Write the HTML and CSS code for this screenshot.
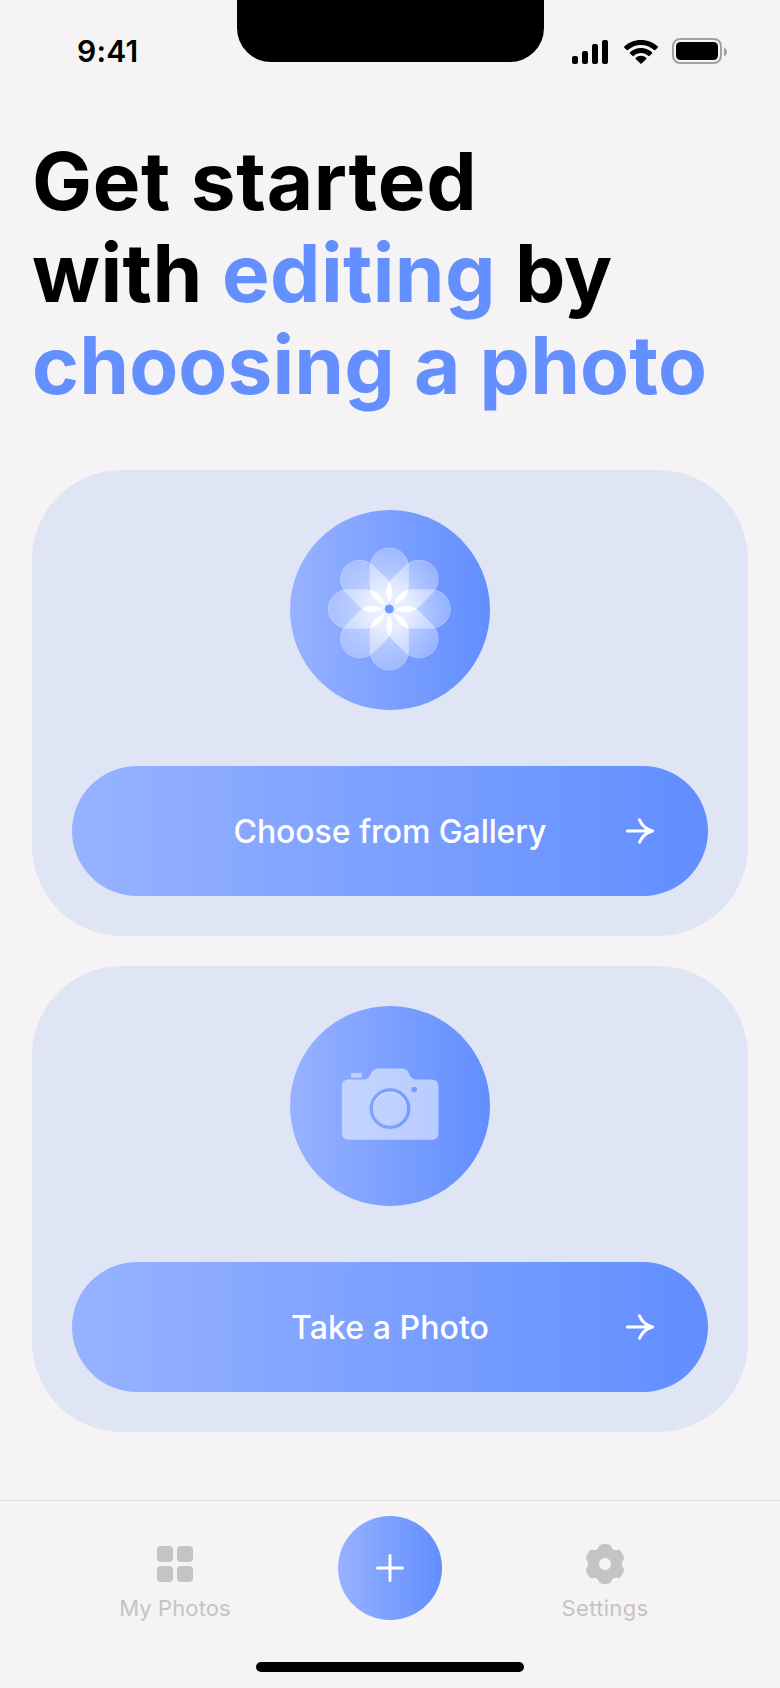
FILE: index.html
```html
<!DOCTYPE html>
<html lang="en">
<head>
<meta charset="utf-8">
<title>Get started</title>
<link rel="stylesheet" href="styles.css">
</head>
<body>
<div class="screen">
  <header class="status">
    <span class="time">9:41</span>
    <div class="notch"></div>
    <div class="indicators">
      <svg class="signal" width="36" height="24" viewBox="0 0 36 24"><rect y="16" width="6" height="8" rx="2"/><rect x="10" y="11" width="6" height="13" rx="2"/><rect x="20" y="4" width="6" height="20" rx="2"/><rect x="30" width="6" height="24" rx="2"/></svg>
      <svg class="wifi" width="34" height="24" viewBox="0 0 34 24"><path d="M17 0C23.600 0 29.600 2.600 33.700 6.500Q34.300 7.100 33.700 7.700L31.300 10.100Q30.700 10.600 30.100 10.100C26.600 6.900 22 5 17 5S7.400 6.900 3.900 10.100Q3.300 10.600 2.700 10.100L.3 7.700Q-.3 7.100 .3 6.500C4.400 2.600 10.400 0 17 0Z"/><path d="M17 8C21.300 8 25.200 9.700 28 12.300Q28.600 12.900 28 13.500L25.600 15.800Q25 16.400 24.400 15.900C22.400 14.100 19.800 13 17 13S11.600 14.100 9.600 15.900Q9 16.400 8.400 15.800L6 13.500Q5.400 12.900 6 12.300C8.800 9.700 12.700 8 17 8Z"/><path d="M17 15.800C19.100 15.800 21 16.600 22.300 17.900Q22.900 18.500 22.300 19.100L17.600 23.600Q17 24.100 16.400 23.600L11.700 19.100Q11.100 18.500 11.700 17.900C13 16.600 14.900 15.800 17 15.800Z"/></svg>
      <svg class="battery" width="55" height="26" viewBox="0 0 55 26"><rect x="1" y="1" width="48" height="24" rx="7" fill="none" stroke="#a3a2a2" stroke-width="2"/><rect x="4" y="4" width="42" height="18" rx="4.500"/><path d="M52 9.500C54 10.400 55 12 55 14S54 17.300 52 18.200Z" fill="#a3a2a2"/></svg>
    </div>
  </header>

  <main class="content">
    <h1 class="title"><span class="line-one">Get started</span><br><span class="line-two">with <span class="accent">editing</span></span> by<br><span class="accent line-three">choosing a photo</span></h1>

    <section class="card">
      <div class="badge">
        <svg width="160" height="160" viewBox="-80 -80 160 160">
          <defs>
            <radialGradient id="petal-fill" gradientUnits="userSpaceOnUse" cx="0" cy="0" r="62">
              <stop offset="0" stop-color="#fff" stop-opacity=".64"/>
              <stop offset=".3" stop-color="#fff" stop-opacity=".58"/>
              <stop offset=".6" stop-color="#fff" stop-opacity=".42"/>
              <stop offset="1" stop-color="#fff" stop-opacity=".26"/>
            </radialGradient>
            <g id="petal">
              <rect x="-19.500" y="-61.500" width="39" height="57.500" rx="19.500" fill="url(#petal-fill)"/>
              <rect x="-19" y="-61" width="38" height="56.500" rx="19" fill="none" stroke="#fff" stroke-opacity=".13"/>
            </g>
            <path id="stamen" d="M0 -27.500Q6 -17 0 -7Q-6 -17 0 -27.500Z" fill="#fff" fill-opacity=".9"/>
          </defs>
          <g transform="translate(-.7 -1)">
            <use href="#petal"/>
            <use href="#petal" transform="rotate(45)"/>
            <use href="#petal" transform="rotate(90)"/>
            <use href="#petal" transform="rotate(135)"/>
            <use href="#petal" transform="rotate(180)"/>
            <use href="#petal" transform="rotate(225)"/>
            <use href="#petal" transform="rotate(270)"/>
            <use href="#petal" transform="rotate(315)"/>
            <use href="#stamen"/>
            <use href="#stamen" transform="rotate(45)"/>
            <use href="#stamen" transform="rotate(90)"/>
            <use href="#stamen" transform="rotate(135)"/>
            <use href="#stamen" transform="rotate(180)"/>
            <use href="#stamen" transform="rotate(225)"/>
            <use href="#stamen" transform="rotate(270)"/>
            <use href="#stamen" transform="rotate(315)"/>
            <circle r="4.200" fill="#6f98ff"/>
          </g>
        </svg>
      </div>
      <div class="button">
        <span class="label-gallery">Choose from Gallery</span>
        <svg class="arrow" width="28" height="26" viewBox="0 0 28 26"><path d="M1.500 13H26.500M13.500 1.800C15.500 6.500 20 11.200 26.500 13C20 14.800 15.500 19.500 13.500 24.200"/></svg>
      </div>
    </section>

    <section class="card">
      <div class="badge">
        <svg width="140" height="120" viewBox="0 6 140 120">
          <defs>
            <mask id="camera-cut" maskUnits="userSpaceOnUse" x="0" y="0" width="140" height="130">
              <rect width="140" height="130" fill="#fff"/>
              <circle cx="70" cy="68.600" r="18.800" fill="none" stroke="#000" stroke-width="3.300"/>
              <circle cx="94.300" cy="49.500" r="2.800" fill="#000"/>
            </mask>
          </defs>
          <g mask="url(#camera-cut)" fill="#fff" fill-opacity=".51" stroke="#fff" stroke-opacity=".22">
            <path d="M28.500 39.800H43C47.500 39.800 49.500 37.500 51 34C52.500 30.300 55 28.800 59 28.800H81C85 28.800 87.500 30.300 89 34C90.500 37.500 92.500 39.800 97 39.800H111.700Q118.200 39.800 118.200 46.300V93Q118.200 99.500 111.700 99.500H28.500Q22.200 99.500 22.200 93V46.300Q22.200 39.800 28.500 39.800Z"/>
            <rect x="31.500" y="33.300" width="10" height="4"/>
            <path d="M54.500 63A16.500 16.500 0 0 1 85.500 63" fill="none" stroke-opacity=".4"/>
          </g>
        </svg>
      </div>
      <div class="button">
        <span class="label-camera">Take a Photo</span>
        <svg class="arrow" width="28" height="26" viewBox="0 0 28 26"><path d="M1.500 13H26.500M13.500 1.800C15.500 6.500 20 11.200 26.500 13C20 14.800 15.500 19.500 13.500 24.200"/></svg>
      </div>
    </section>
  </main>

  <nav class="tabs">
    <div class="tab">
      <svg width="48" height="48" viewBox="0 0 48 48"><rect x="6" y="6" width="16" height="16" rx="4"/><rect x="26" y="6" width="16" height="16" rx="4"/><rect x="6" y="26" width="16" height="16" rx="4"/><rect x="26" y="26" width="16" height="16" rx="4"/></svg>
      <span>My Photos</span>
    </div>
    <div class="add">
      <svg width="28" height="28" viewBox="0 0 28 28"><path d="M14 1.500V26.500M1.500 14H26.500"/></svg>
    </div>
    <div class="tab">
      <svg width="48" height="48" viewBox="0 0 48 48"><path fill-rule="evenodd" d="M20 4.500Q24 3.500 28 4.500Q29.800 5 30.500 7Q31.500 10.200 35 10.200Q38.200 9.200 39.500 11Q42 14 43 17.500Q43.300 19 42 20.500Q39.800 24 42 27.500Q43.300 29 43 30.500Q42 34 39.500 37Q38.200 38.800 35 37.800Q31.500 37.800 30.500 41Q29.800 43 28 43.500Q24 44.500 20 43.500Q18.200 43 17.500 41Q16.500 37.800 13 37.800Q9.800 38.800 8.500 37Q6 34 5 30.500Q4.700 29 6 27.500Q8.200 24 6 20.500Q4.700 19 5 17.500Q6 14 8.500 11Q9.800 9.200 13 10.200Q16.500 10.200 17.500 7Q18.200 5 20 4.500ZM24 18A6 6 0 1 0 24 30A6 6 0 1 0 24 18Z"/></svg>
      <span>Settings</span>
    </div>
  </nav>
  <div class="home"></div>
</div>
</body>
</html>
```
FILE: styles.css
```css
* { box-sizing: border-box; }
body { margin: 0; background: #f5f3f4; font-family: Inter, "Liberation Sans", sans-serif; color: #000; }
svg { display: block; }
.screen { width: 780px; height: 1688px; display: flex; flex-direction: column; overflow: hidden; }
.status { display: grid; grid-template-columns: 236.500px 307px 236.500px; height: 135px; }
.time { padding: 33px 0 0 77px; font-size: 30px; line-height: 36px; font-weight: 600; letter-spacing: .2px; }
.notch { height: 62px; background: #000; border-radius: 0 0 34px 34px; }
.indicators { display: flex; align-items: flex-start; padding: 38px 0 0 28.500px; }
.signal { margin-top: 2px; }
.wifi { margin: 2px 0 0 16px; }
.battery { margin-left: 14px; }
.content { display: flex; flex-direction: column; padding: 0 32px; }
.title { margin: 0 0 59px; font-size: 80px; line-height: 92px; font-weight: 700; white-space: nowrap; }
.line-one { letter-spacing: .7px; }
.line-two { letter-spacing: .42px; }
.line-three { letter-spacing: .13px; }
.accent { color: #6490ff; }
.card { height: 466px; padding: 40px; border-radius: 90px; background: #dfe5f5; display: flex; flex-direction: column; align-items: center; gap: 56px; }
.card + .card { margin-top: 30px; }
.badge, .button, .add { display: flex; align-items: center; justify-content: center; background: linear-gradient(90deg, #97b2ff, #618eff); color: #fff; }
.badge { width: 200px; height: 200px; border-radius: 50%; flex: none; }
.button { width: 636px; height: 130px; border-radius: 65px; display: grid; grid-template-columns: 82px 1fr 82px; font-size: 32px; font-weight: 500; }
.button span { grid-column: 2; text-align: center; white-space: nowrap; }
.label-gallery { letter-spacing: -.08px; }
.label-camera { letter-spacing: .08px; }
.arrow, .add svg { fill: none; stroke: #fff; stroke-width: 3; stroke-linecap: round; stroke-linejoin: round; }
.tabs { margin-top: 68px; height: 156px; border-top: 1px solid #dfdddf; display: grid; grid-template-columns: 338px 104px 338px; align-items: start; padding-top: 15px; }
.tab { display: flex; flex-direction: column; align-items: center; gap: 7px; padding-top: 24px; color: #c5c3c4; fill: #c5c3c4; font-size: 22px; line-height: 27px; letter-spacing: .35px; }
.tab:first-child { padding-left: 12px; letter-spacing: .1px; }
.tab:last-child { padding-right: 12px; }
.add { width: 104px; height: 104px; border-radius: 50%; }
.home { width: 268px; height: 10px; margin: 6px auto 0; border-radius: 5px; background: #000; }
```
